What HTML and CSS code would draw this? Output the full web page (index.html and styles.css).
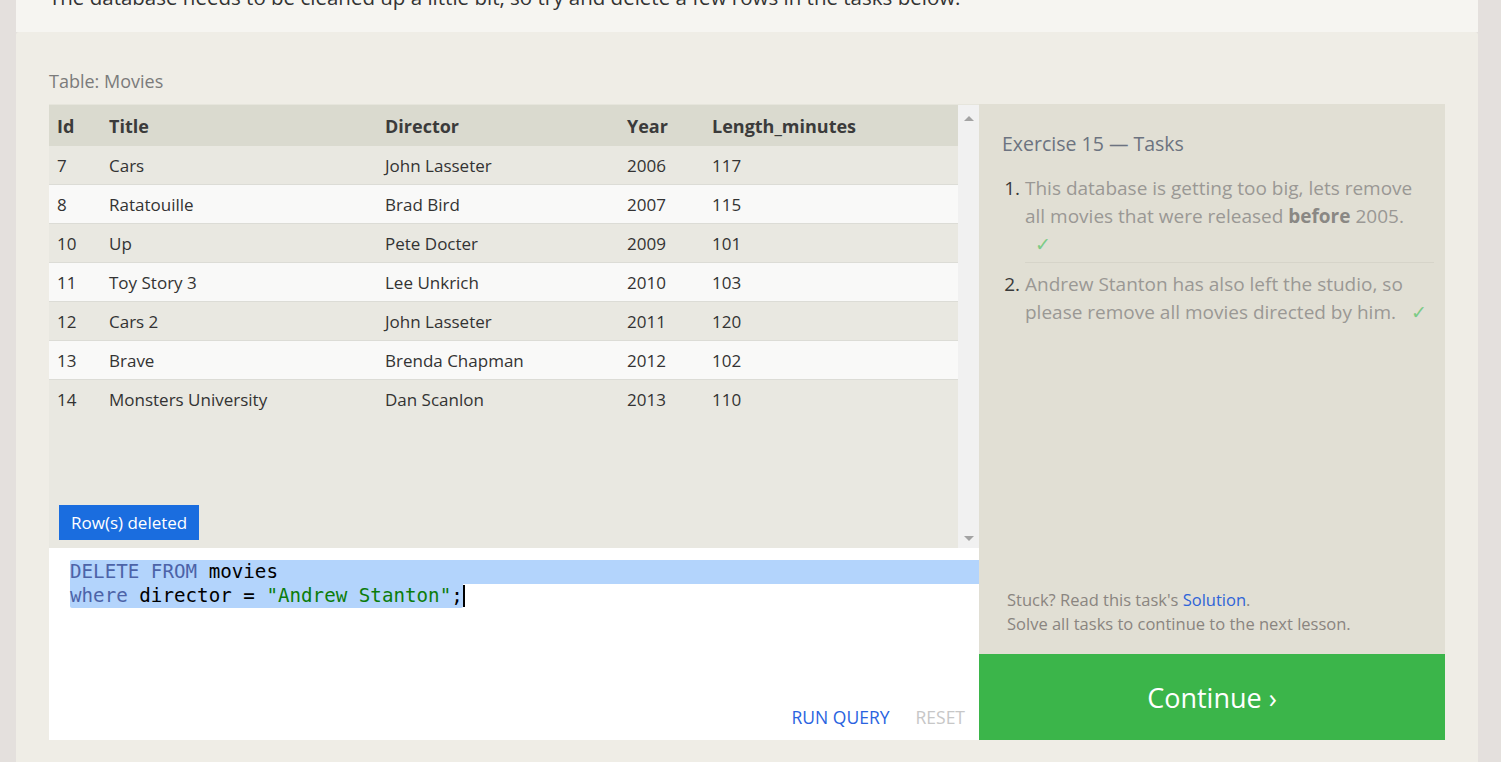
FILE: index.html
```html
<!DOCTYPE html>
<html>
<head>
<meta charset="utf-8">
<link rel="stylesheet" href="styles.css">
</head>
<body>
<div class="page">
  <div class="intro">
    <p>The database needs to be cleaned up a little bit, so try and delete a few rows in the tasks below.</p>
  </div>
  <div class="exercise">
    <div class="table-label">Table: Movies</div>
    <div class="workspace">
      <div class="left">
        <div class="results">
          <div class="table-scroll">
            <table class="data">
              <colgroup>
                <col class="c-id"><col class="c-title"><col class="c-dir"><col class="c-year"><col class="c-len">
              </colgroup>
              <thead>
                <tr><th>Id</th><th>Title</th><th>Director</th><th>Year</th><th>Length_minutes</th></tr>
              </thead>
              <tbody>
                <tr><td>7</td><td>Cars</td><td>John Lasseter</td><td>2006</td><td>117</td></tr>
                <tr><td>8</td><td>Ratatouille</td><td>Brad Bird</td><td>2007</td><td>115</td></tr>
                <tr><td>10</td><td>Up</td><td>Pete Docter</td><td>2009</td><td>101</td></tr>
                <tr><td>11</td><td>Toy Story 3</td><td>Lee Unkrich</td><td>2010</td><td>103</td></tr>
                <tr><td>12</td><td>Cars 2</td><td>John Lasseter</td><td>2011</td><td>120</td></tr>
                <tr><td>13</td><td>Brave</td><td>Brenda Chapman</td><td>2012</td><td>102</td></tr>
                <tr><td>14</td><td>Monsters University</td><td>Dan Scanlon</td><td>2013</td><td>110</td></tr>
              </tbody>
            </table>
          </div>
          <div class="scrollbar">
            <span class="arrow-up"></span>
            <span class="arrow-down"></span>
          </div>
          <div class="badge">Row(s) deleted</div>
        </div>
        <div class="editor">
          <div class="code">
            <div class="line sel-full"><span class="kw">DELETE FROM</span> movies</div>
            <div class="line"><span class="sel"><span class="kw">where</span> director = <span class="str">"Andrew Stanton"</span>;</span><span class="cursor"></span></div>
          </div>
          <div class="actions">
            <span class="run">RUN QUERY</span>
            <span class="reset">RESET</span>
          </div>
        </div>
      </div>
      <div class="right">
        <div class="tasks">
          <h2 class="tasks-title">Exercise 15 — Tasks</h2>
          <ol class="task-list">
            <li>This database is getting too big, lets remove all movies that were released <b>before</b> 2005. <span class="check">✓</span></li>
            <li>Andrew Stanton has also left the studio, so please remove all movies directed by him. <span class="check">✓</span></li>
          </ol>
          <div class="help">
            <div>Stuck? Read this task's <span class="link">Solution</span>.</div>
            <div>Solve all tasks to continue to the next lesson.</div>
          </div>
        </div>
        <div class="continue">Continue ›</div>
      </div>
    </div>
  </div>
</div>
</body>
</html>
```

FILE: styles.css
```css
html, body {
  margin: 0;
  padding: 0;
}
body {
  background: #e4e0dd;
  font-family: "Open Sans", "Noto Sans", sans-serif;
  height: 762px;
  overflow: hidden;
}
.page {
  margin: 0 23px 0 16px;
}
.intro {
  display: flow-root;
  background: #f6f5f1;
  height: 32px;
  padding: 0 33px;
}
.intro p {
  margin: -17px 0 0;
  font-size: 20.5px;
  line-height: 28px;
  color: #333;
  white-space: nowrap;
}
.exercise {
  background: #efede6;
  padding: 36px 33px 40px;
  border-radius: 3px 3px 0 0;
}
.table-label {
  font-size: 18px;
  color: #7b7b7b;
  line-height: 26px;
  margin-bottom: 10px;
}
.workspace {
  display: flex;
}
.left {
  width: 930px;
  display: flex;
  flex-direction: column;
}
.results {
  position: relative;
  height: 444px;
  display: flex;
  background: #e9e8e1;
  border-top: 1px solid #e6e5dc;
  box-sizing: border-box;
}
.table-scroll {
  width: 909px;
}
.data {
  width: 909px;
  border-collapse: collapse;
  table-layout: fixed;
  font-size: 17px;
  color: #333;
}
.c-id { width: 52px; }
.c-title { width: 276px; }
.c-dir { width: 242px; }
.c-year { width: 85px; }
.c-len { width: 254px; }
.data th {
  text-align: left;
  background: #dadacf;
  font-weight: 700;
  height: 41px;
  padding: 0 8px;
  font-size: 18px;
  color: #3b3b3b;
}
.data td {
  height: 38px;
  padding: 0 8px;
  border-bottom: 1px solid #dcdcd6;
}
.data tbody tr:nth-child(odd) td {
  background: #e9e8e1;
}
.data tbody tr:nth-child(even) td {
  background: #f9f9f8;
}
.data tbody tr:last-child td {
  border-bottom: none;
}
.scrollbar {
  width: 21px;
  background: #f1f1f1;
  display: flex;
  flex-direction: column;
  justify-content: space-between;
  align-items: center;
  padding: 11px 0 7px;
  box-sizing: border-box;
}
.arrow-up {
  width: 0; height: 0;
  border-left: 5px solid transparent;
  border-right: 5px solid transparent;
  border-bottom: 5px solid #a3a3a3;
}
.arrow-down {
  width: 0; height: 0;
  border-left: 5px solid transparent;
  border-right: 5px solid transparent;
  border-top: 5px solid #a3a3a3;
}
.badge {
  position: absolute;
  left: 10px;
  bottom: 8px;
  background: #1a6ddf;
  color: #fff;
  font-size: 17px;
  height: 35px;
  line-height: 35px;
  padding: 0 12px;
}
.editor {
  background: #fff;
  height: 192px;
  display: flex;
  flex-direction: column;
  justify-content: space-between;
  box-sizing: border-box;
  padding: 12px 0 12px;
}
.code {
  font-family: "DejaVu Sans Mono", "Liberation Mono", monospace;
  font-size: 19.2px;
  line-height: 24px;
  color: #000;
  padding-left: 21px;
}
.line {
  height: 24px;
  white-space: pre;
  display: flex;
  align-items: center;
}
.sel-full {
  background: #b3d4fc;
  border-radius: 2px 0 0 0;
}
.sel {
  background: #b3d4fc;
  height: 24px;
  border-radius: 0 0 2px 2px;
}
.kw { color: #4c63a8; }
.str { color: #0b7c0b; }
.cursor {
  display: inline-block;
  width: 2px;
  height: 22px;
  background: #000;
}
.actions {
  display: flex;
  justify-content: flex-end;
  gap: 26px;
  padding-right: 14px;
  font-size: 17.5px;
  line-height: 22px;
}
.run { color: #2a63e0; }
.reset { color: #c7c7c7; }
.right {
  width: 466px;
  display: flex;
  flex-direction: column;
}
.tasks {
  background: #e1dfd4;
  height: 550px;
  box-sizing: border-box;
  padding: 26px 11px 18px 23px;
  display: flex;
  flex-direction: column;
}
.tasks-title {
  margin: 0 0 16px;
  font-weight: 400;
  font-size: 19.5px;
  line-height: 28px;
  color: #6c7380;
}
.task-list {
  margin: 0;
  padding-left: 23px;
  font-size: 19px;
  line-height: 28px;
  color: #9a9894;
}
.task-list li {
  padding-bottom: 4px;
}
.task-list li::marker {
  color: #3a3a3a;
}
.task-list li + li {
  border-top: 1px solid #d6d4c9;
  padding-top: 7px;
}
.task-list b {
  color: #8a8884;
}
.check {
  color: #7ccb86;
  margin-left: 10px;
}
.help {
  margin-top: auto;
  padding-left: 5px;
  font-size: 16.5px;
  line-height: 24px;
  color: #8a8580;
}
.link { color: #2f64d8; }
.continue {
  background: #3bb54a;
  height: 86px;
  display: flex;
  align-items: center;
  justify-content: center;
  color: #fff;
  font-size: 27px;
}
```
